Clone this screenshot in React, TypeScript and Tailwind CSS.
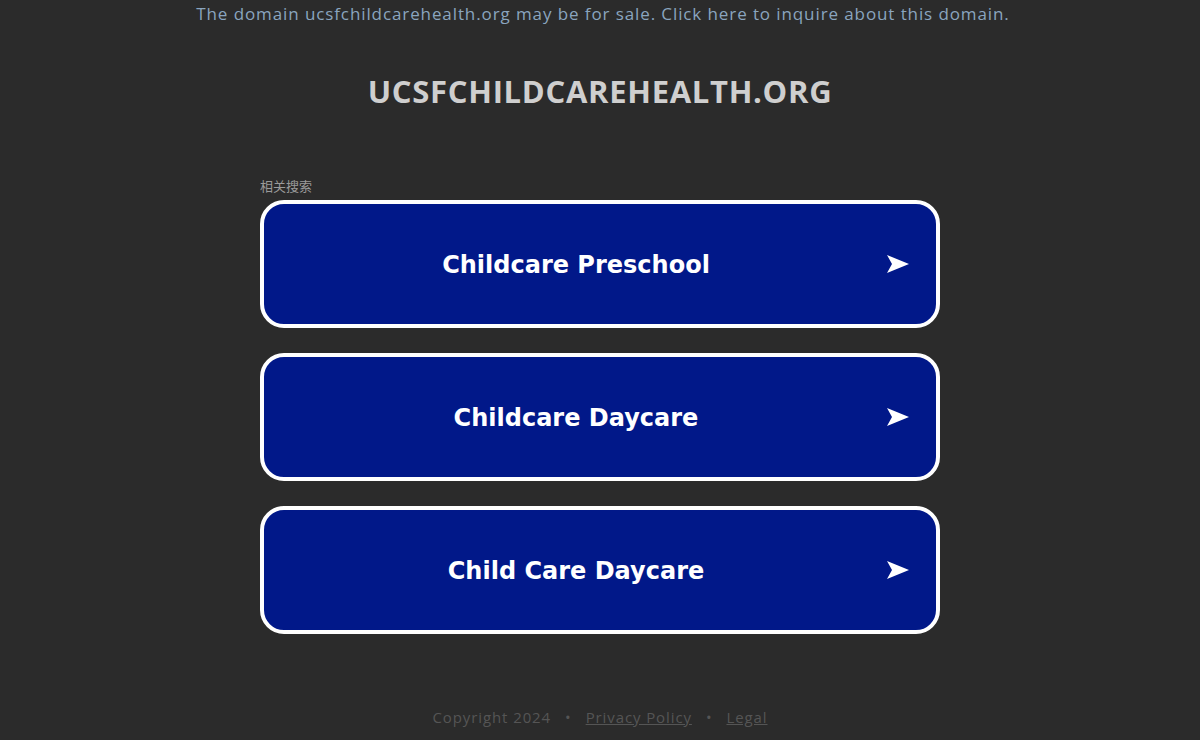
import React from 'react';

const links = ['Childcare Preschool', 'Childcare Daycare', 'Child Care Daycare'];

const Arrow = () => (
  <svg width="22" height="18" viewBox="0 0 22 18" className="fill-white">
    <path d="M0 0 L22 9 L0 18 L5 9 Z" />
  </svg>
);

export default function App() {
  return (
    <div
      className="w-[1200px] h-[740px] bg-[#2b2b2b] flex flex-col items-center overflow-hidden"
      style={{ fontFamily: '"Open Sans", "Noto Sans", sans-serif' }}
    >
      <div className="mt-[3px] ml-[6px] text-[17px] leading-[22px] tracking-[0.9px] text-[#8aa5bf]">
        The domain ucsfchildcarehealth.org may be for sale. Click here to inquire about this domain.
      </div>

      <h1 className="mt-[48px] text-[31px] leading-[36px] font-bold text-[#cfcfcf] tracking-[0.7px]">
        UCSFCHILDCAREHEALTH.ORG
      </h1>

      <div className="mt-[68px] w-[680px] flex flex-col">
        <div
          className="text-[13px] leading-[18px] text-[#9a9a9a] mb-[5px]"
          style={{ fontFamily: '"Noto Sans CJK SC", sans-serif' }}
        >
          相关搜索
        </div>
        <div className="flex flex-col gap-[25px]">
          {links.map(l => (
            <div
              key={l}
              className="relative h-[128px] rounded-[24px] border-4 border-white bg-[#011889] flex items-center justify-center pr-[48px]"
            >
              <span
                className="text-[24px] font-bold text-white mt-[2px]"
                style={{ fontFamily: '"DejaVu Sans", Verdana, sans-serif' }}
              >
                {l}
              </span>
              <div className="absolute right-[27px] top-1/2 -translate-y-1/2 flex">
                <Arrow />
              </div>
            </div>
          ))}
        </div>
      </div>

      <div className="mt-auto mb-[12px] flex items-center gap-[14px] text-[15px] tracking-[0.9px] text-[#555555]">
        <span>Copyright 2024</span>
        <span>•</span>
        <span className="underline">Privacy Policy</span>
        <span>•</span>
        <span className="underline">Legal</span>
      </div>
    </div>
  );
}
